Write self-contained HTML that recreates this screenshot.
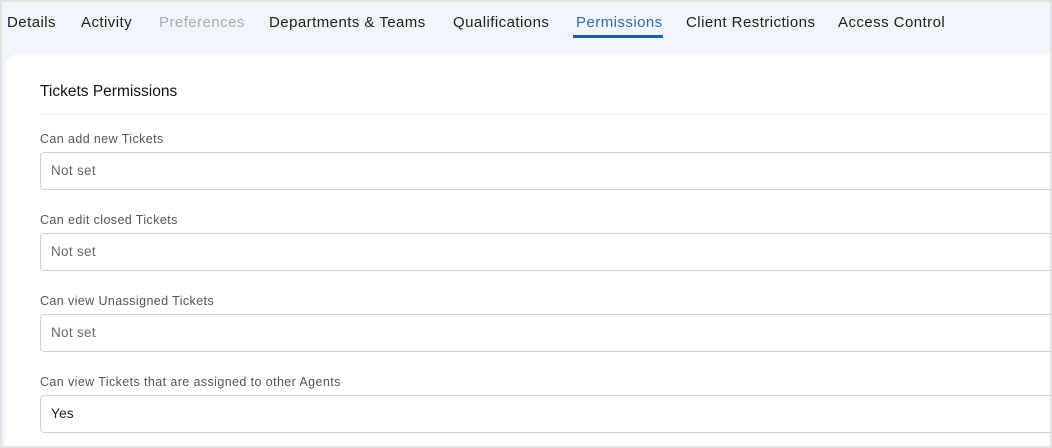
<!DOCTYPE html>
<html><head><meta charset="utf-8"><style>
*{margin:0;padding:0;box-sizing:border-box}
html,body{width:1052px;height:448px;overflow:hidden;background:#fff}
body{font-family:"Liberation Sans",sans-serif;position:relative}
.frame{position:absolute;left:0;top:0;width:1052px;height:448px;border:2px solid #e2e2e2;background:#f0f4fb;overflow:hidden}
.tab{position:absolute;top:12px;font-size:15px;color:#1e1e1e;white-space:nowrap;letter-spacing:0.45px}
.card{position:absolute;left:3px;top:52px;width:1100px;height:400px;background:#fff;border-top-left-radius:14px}
.title{position:absolute;left:35px;top:29px;font-size:15.5px;color:#111}
.hr{position:absolute;left:35px;top:59px;width:1100px;height:1px;background:#eeeeee}
.lbl{position:absolute;left:35px;font-size:12.5px;color:#555;letter-spacing:0.4px}
.inp{position:absolute;left:35px;width:1100px;height:38px;border:1px solid #cfcfcf;border-radius:4px;font-size:13.5px;color:#666;padding:10px 0 0 10px;letter-spacing:0.3px}
</style></head><body>
<div class="frame">
<div class="tab" style="left:5px">Details</div>
<div class="tab" style="left:79px">Activity</div>
<div class="tab" style="left:157px;color:#aaa">Preferences</div>
<div class="tab" style="left:267px">Departments &amp; Teams</div>
<div class="tab" style="left:451px">Qualifications</div>
<div class="tab" style="left:574px;color:#2f6faa">Permissions</div>
<div style="position:absolute;left:571px;top:33px;width:90px;height:3px;background:#1b5e9e"></div>
<div class="tab" style="left:684px">Client Restrictions</div>
<div class="tab" style="left:836px">Access Control</div>
<div class="card">
<div class="title">Tickets Permissions</div>
<div class="hr"></div>
<div class="lbl" style="top:78px">Can add new Tickets</div>
<div class="inp" style="top:98px">Not set</div>
<div class="lbl" style="top:159px">Can edit closed Tickets</div>
<div class="inp" style="top:179px">Not set</div>
<div class="lbl" style="top:240px">Can view Unassigned Tickets</div>
<div class="inp" style="top:260px">Not set</div>
<div class="lbl" style="top:321px">Can view Tickets that are assigned to other Agents</div>
<div class="inp" style="top:341px;color:#222">Yes</div>
</div>
</div>
<div style="position:absolute;left:0;top:0;width:1052px;height:448px;border:2px solid #e2e2e2;pointer-events:none"></div>
</body></html>
